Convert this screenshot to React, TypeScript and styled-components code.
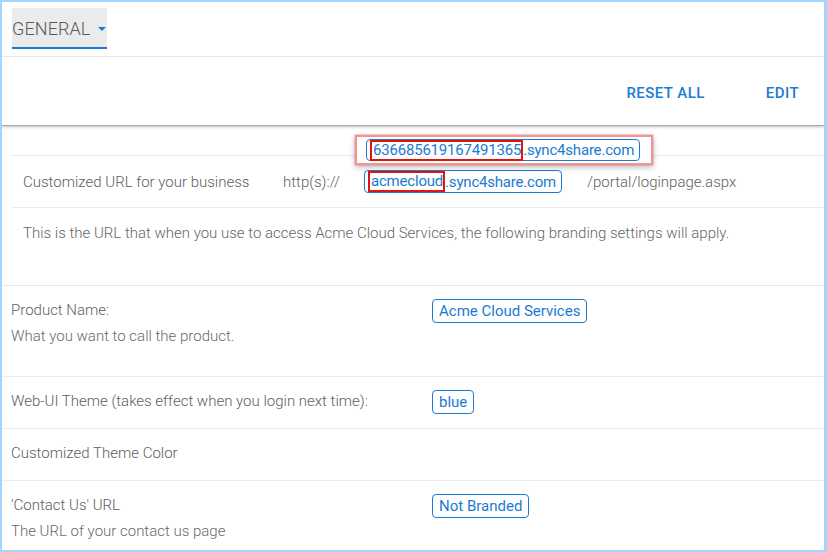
import React from "react";
import styled, { createGlobalStyle } from "styled-components";

const Global = createGlobalStyle`
  html, body { margin: 0; padding: 0; background: #fff; }
  body { font-family: Roboto, "Liberation Sans", sans-serif; }
  * { box-sizing: border-box; }
`;

const BLUE = "#1a7bd2";

const Frame = styled.div`
  width: 827px;
  height: 552px;
  border: 2px solid #a3d5ff;
  border-right-width: 3px;
  background: #fff;
  overflow: hidden;
  display: flex;
  flex-direction: column;
`;

const Header = styled.div`
  height: 55px;
  flex: none;
  padding: 6px 0 0 10px;
  border-bottom: 1px solid #ececec;
`;

const Tab = styled.div`
  display: inline-flex;
  align-items: center;
  height: 41px;
  padding-top: 2px;
  background: #ebebeb;
  border-bottom: 2px solid ${BLUE};
  padding-right: 1px;
  font-size: 18px;
  font-weight: 300;
  color: #5a5a5a;
  letter-spacing: 0.1px;
`;

const Caret = styled.span`
  width: 0;
  height: 0;
  margin-left: 8px;
  margin-top: 1px;
  border-left: 4px solid transparent;
  border-right: 4px solid transparent;
  border-top: 4px solid ${BLUE};
`;

const Toolbar = styled.div`
  height: 68px;
  flex: none;
  display: flex;
  align-items: center;
  justify-content: flex-end;
  gap: 61px;
  padding: 4px 25px 0 0;
  position: relative;
  z-index: 1;
  box-shadow: 0 1px 0 #a9a9a9, 0 2px 3px rgba(0, 0, 0, 0.25);
`;

const ToolButton = styled.button`
  border: none;
  background: none;
  padding: 0;
  font-family: Roboto, "Liberation Sans", sans-serif;
  font-size: 15px;
  font-weight: 500;
  letter-spacing: 0.45px;
  color: ${BLUE};
  cursor: pointer;
`;

const UrlSection = styled.div`
  position: relative;
  padding-left: 9px;
  border-bottom: 1px solid #e6e6e6;
  flex: none;
`;

const BlankRow = styled.div`
  height: 31px;
  border-bottom: 1px solid #ebebeb;
`;

const UrlRow = styled.div`
  height: 52px;
  display: flex;
  align-items: center;
  padding-left: 12px;
  border-bottom: 1px solid #ebebeb;
  font-size: 15px;
  font-weight: 300;
  color: #606060;
`;

const Cell = styled.span<{ $w?: number; $ml?: number }>`
  flex: none;
  ${(p) => (p.$w ? `width: ${p.$w}px;` : "")}
  ${(p) => (p.$ml ? `margin-left: ${p.$ml}px;` : "")}
`;

const Note = styled.div`
  height: 77px;
  padding: 14px 0 0 12px;
  font-size: 15px;
  line-height: 22px;
  font-weight: 300;
  color: #666;
`;

const Pill = styled.span<{ $h?: number; $tight?: boolean }>`
  display: inline-flex;
  align-items: center;
  height: ${(p) => p.$h ?? 24}px;
  padding: 0 ${(p) => (p.$tight ? 5 : 6)}px;
  border: 1px solid ${BLUE};
  border-radius: 4px;
  color: ${BLUE};
  font-size: 15px;
  font-weight: 400;
  letter-spacing: ${(p) => (p.$tight ? -0.2 : 0)}px;
  white-space: nowrap;
  background: #fff;
`;

const Mark = styled.span`
  border: 2px solid #e3140f;
  margin-left: -2px;
  padding: 0 0 0 1px;
  line-height: 17px;
`;

const Callout = styled.div`
  position: absolute;
  left: 353px;
  top: 10px;
  width: 298px;
  height: 30px;
  border: 2px solid #f59292;
  background: #fff;
  box-shadow: 0 2px 6px rgba(0, 0, 0, 0.28), 0 0 0 1px rgba(245, 146, 146, 0.35);
  display: flex;
  align-items: center;
  padding-left: 9px;
`;

const SettingRow = styled.div<{ $tall?: boolean }>`
  display: grid;
  grid-template-columns: 421px 1fr;
  align-items: start;
  padding: 13px 9px ${(p) => (p.$tall ? 29 : 14)}px;
  min-height: 52px;
  border-bottom: 1px solid #ebebeb;
  flex: none;
`;

const LabelCol = styled.div`
  display: flex;
  flex-direction: column;
  gap: 4px;
  font-size: 15px;
  line-height: 22px;
  font-weight: 300;
  color: #606060;
`;

const Desc = styled.span`
  color: #6a6a6a;
`;

type Setting = { label: string; desc?: string; value?: string };

const settings: Setting[] = [
  { label: "Product Name:", desc: "What you want to call the product.", value: "Acme Cloud Services" },
  { label: "Web-UI Theme (takes effect when you login next time):", value: "blue" },
  { label: "Customized Theme Color" },
  { label: "'Contact Us' URL", desc: "The URL of your contact us page", value: "Not Branded" },
];

export default function App() {
  return (
    <>
      <Global />
      <Frame>
        <Header>
          <Tab>
            GENERAL
            <Caret />
          </Tab>
        </Header>
        <Toolbar>
          <ToolButton>RESET ALL</ToolButton>
          <ToolButton>EDIT</ToolButton>
        </Toolbar>
        <UrlSection>
          <BlankRow />
          <UrlRow>
            <Cell $w={260}>Customized URL for your business</Cell>
            <Cell $w={81}>http(s)://</Cell>
            <Pill $h={23} $tight>
              <Mark>acmecloud</Mark>.sync4share.com
            </Pill>
            <Cell $ml={25}>/portal/loginpage.aspx</Cell>
          </UrlRow>
          <Note>
            This is the URL that when you use to access Acme Cloud Services, the following branding settings will apply.
          </Note>
          <Callout>
            <Pill $h={22} $tight>
              <Mark>636685619167491365</Mark>.sync4share.com
            </Pill>
          </Callout>
        </UrlSection>
        {settings.map((s) => (
          <SettingRow key={s.label} $tall={!!s.desc}>
            <LabelCol>
              <span>{s.label}</span>
              {s.desc && <Desc>{s.desc}</Desc>}
            </LabelCol>
            <div>{s.value && <Pill>{s.value}</Pill>}</div>
          </SettingRow>
        ))}
      </Frame>
    </>
  );
}
